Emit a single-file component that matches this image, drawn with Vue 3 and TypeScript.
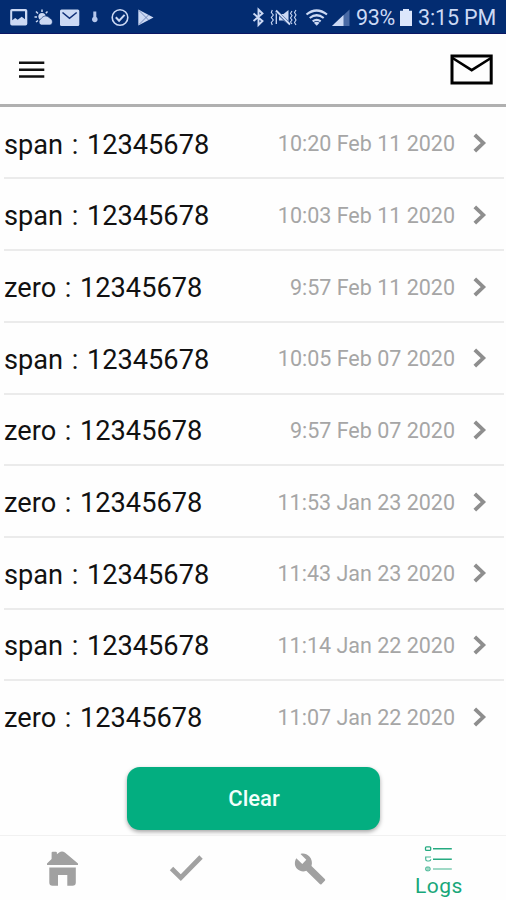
<script setup lang="ts">
interface LogEntry {
  kind: 'span' | 'zero'
  serial: string
  time: string
}

const logs: LogEntry[] = [
  { kind: 'span', serial: '12345678', time: '10:20 Feb 11 2020' },
  { kind: 'span', serial: '12345678', time: '10:03 Feb 11 2020' },
  { kind: 'zero', serial: '12345678', time: '9:57 Feb 11 2020' },
  { kind: 'span', serial: '12345678', time: '10:05 Feb 07 2020' },
  { kind: 'zero', serial: '12345678', time: '9:57 Feb 07 2020' },
  { kind: 'zero', serial: '12345678', time: '11:53 Jan 23 2020' },
  { kind: 'span', serial: '12345678', time: '11:43 Jan 23 2020' },
  { kind: 'span', serial: '12345678', time: '11:14 Jan 22 2020' },
  { kind: 'zero', serial: '12345678', time: '11:07 Jan 22 2020' },
]
</script>

<template>
  <div class="screen">
    <div class="status">
      <div class="notifications">
        <svg width="21" height="34" viewBox="10 0 21 34">
          <path fill-rule="evenodd" d="M12 9h13.500q1.800 0 1.800 1.800v13q0 1.800-1.800 1.800H12q-1.800 0-1.800-1.800v-13Q10.200 9 12 9Zm.2 2.300v9l3-2.300 2.500 1.800 4-3 3.300 2.500v-8Z" fill="#ccd9f4" />
        </svg>
        <svg width="25" height="34" viewBox="31 0 25 34">
          <circle cx="42" cy="16.500" r="3.600" fill="#ccd9f4" />
          <path d="M42 9.500v2.500M36 11.500l2 2M47.500 11.500l-1.700 1.700M34.500 17h2.500M36 22l2-1.500" stroke="#ccd9f4" stroke-width="1.500" />
          <path d="M41 25a3.400 3.400 0 0 1 .2-6.300 5 5 0 0 1 8.600-.4c3 .4 4 6.700-.3 6.700Z" fill="#ccd9f4" stroke="#032c71" stroke-width=".6" />
        </svg>
        <svg width="27" height="34" viewBox="56 0 27 34">
          <rect x="60" y="9.500" width="19.300" height="16.500" rx="1.500" fill="#ccd9f4" />
          <path d="m62.500 12.500 7 5.800 7.200-5.800" fill="none" stroke="#102f78" stroke-width="1.600" />
        </svg>
        <svg width="24" height="34" viewBox="83 0 24 34">
          <path d="M93.300 11.500h3V17a2.800 2.800 0 1 1-3 0Z" fill="#b6c7eb" />
        </svg>
        <svg width="26" height="34" viewBox="107 0 26 34">
          <circle cx="120" cy="17.500" r="7.800" fill="none" stroke="#ccd9f4" stroke-width="1.600" />
          <path d="m115.800 17.200 3.300 3.500 5.500-5.800" fill="none" stroke="#ccd9f4" stroke-width="2" />
        </svg>
        <svg width="24" height="34" viewBox="133 0 24 34">
          <path d="M138.300 9.500 153.500 17.500l-15.200 8Z" fill="#ccd9f4" />
          <path d="m139 10.500 9.500 9.500M139 24.500l9.500-9.500" stroke="#5e77ad" stroke-width=".8" />
        </svg>
      </div>
      <div class="system">
        <svg width="19" height="34" viewBox="249 0 19 34">
          <path d="m253.500 13.500 9 7.500-4 4V9.500l4 4-9 7.500" fill="none" stroke="#ccd9f4" stroke-width="1.900" />
        </svg>
        <svg width="34" height="34" viewBox="268 0 34 34">
          <path d="m272.300 10-1 2.500 2 2.500-2 2.500 2 2.500-2 2.500 1 2.500M292 11l-1.500 2.500 1.500 2-1.500 2.500 1.500 2-1.500 2 1.500 2M296 10l-1.500 2.500 1.500 2.500-1.500 2.500 1.500 2.500-1.500 2.500 1.500 2.500" fill="none" stroke="#ccd9f4" stroke-width="1.100" />
          <path d="M276.300 11v13" stroke="#ccd9f4" stroke-width="1.300" />
          <path d="M279 14h4.500l5-4v14.500l-5-4H279Z" fill="#ccd9f4" />
          <path d="m276 11 14 13.500" stroke="#032c71" stroke-width="3" />
          <path d="m276 10.500 14 14" stroke="#ccd9f4" stroke-width="1.900" />
        </svg>
        <svg width="27" height="34" viewBox="302 0 27 34">
          <path d="M306.500 14.500q10-8 20.500 0M309.700 18q7-5.500 14 0M312.700 21.300q4-3 8 0" fill="none" stroke="#ccd9f4" stroke-width="2.200" />
          <path d="m313.800 22.800 2.900 3 2.900-3q-2.900-2-5.800 0Z" fill="#ccd9f4" />
        </svg>
        <svg width="27" height="34" viewBox="329 0 27 34">
          <path d="M332 26 349.500 9.500V26Z" fill="#496aa5" />
          <path d="M332 26 343.500 15v11Z" fill="#ccd9f4" />
        </svg>
        <span class="percent">93%</span>
        <svg width="20" height="34" viewBox="396 0 20 34">
          <path d="M403 9h6v1.700h3V26H400V10.700h3Z" fill="#dce6fb" />
        </svg>
        <span class="clock">3:15 PM</span>
      </div>
    </div>

    <header class="toolbar">
      <svg width="27" height="20" viewBox="18 60 27 20">
        <path d="M19 62.700h25.300M19 69.700h25.300M19 76.500h25.300" stroke="#111" stroke-width="2.500" />
      </svg>
      <svg width="44" height="32" viewBox="450 54 44 32">
        <rect x="452" y="56" width="39.200" height="27" fill="none" stroke="#000" stroke-width="3" />
        <path d="m452.500 58 19.200 12.200L491 58" fill="none" stroke="#000" stroke-width="2.600" />
      </svg>
    </header>

    <main class="logs">
      <div v-for="log in logs" :key="log.time" class="row">
        <span class="name">{{ log.kind }} : {{ log.serial }}</span>
        <span class="time">{{ log.time }}</span>
        <svg class="chevron" width="14" height="22" viewBox="0 0 14 22">
          <path d="m1.800 2.800 8.500 8.200-8.500 8.200" fill="none" stroke="#8e8e8e" stroke-width="3.800" />
        </svg>
      </div>
    </main>

    <div class="actions">
      <button class="clear" type="button">Clear</button>
    </div>

    <nav class="tabs">
      <div class="tab home">
        <svg width="32" height="36" viewBox="46 851 32 36">
          <path d="M47 865v-1.500l4.600-4.500v-6.300q0-1 1-1h3.300q1 0 1 1v1.500l2.200-1.800q2.900-2 5.800 0L78 863.500v1.500Z" fill="#a1a1a1" />
          <path d="M49.300 867.600h26.500v14.900q0 3.300-3.300 3.300H67.300V875H58v10.800h-5.400q-3.300 0-3.300-3.300Z" fill="#a1a1a1" />
        </svg>
      </div>
      <div class="tab check">
        <svg width="34" height="28" viewBox="169 855 34 28">
          <path d="m171.500 869.500 9.300 9.200L201 858" fill="none" stroke="#a1a1a1" stroke-width="4.800" />
        </svg>
      </div>
      <div class="tab tools">
        <svg width="34" height="34" viewBox="293 852 34 34">
          <path d="m300.500 854 5.800 5.800-4 4.300-6-5.800c-2.300 4-1.700 8.200 1 10.800 2.600 2.300 6 2.900 9 1.700l13.500 13.300q1 .7 1.900-.2l3.100-3.100q1-1 0-1.900L311.500 866c1-3.400.3-6.800-2.100-9.400-2.500-2.600-5.700-3.600-8.900-2.600Z" fill="#a1a1a1" />
        </svg>
      </div>
      <div class="tab active">
        <svg width="30" height="29" viewBox="425 844 30 29">
          <path d="M434 848.800h18.800M434 859.300h18.800" stroke="#25aa80" stroke-width="1.400" />
          <path d="M434 869h18.800" stroke="#a0d9c6" stroke-width="2" />
          <rect x="426.500" y="846.800" width="5.200" height="3.600" rx="1" fill="none" stroke="#25aa80" stroke-width="1.300" />
          <path d="M432 857h-5.300v2.300q0 1.700 1.800 1.700h1.500q1.800 0 1.800-1.700" fill="none" stroke="#4bb898" stroke-width="1.200" />
          <rect x="426.500" y="867" width="4.700" height="3.800" rx="1.500" fill="#a0d9c6" stroke="#4bb898" stroke-width="1" />
        </svg>
        <span class="label">Logs</span>
      </div>
    </nav>
  </div>
</template>

<style>
body {
  margin: 0;
  background: #fff;
}
</style>

<style scoped>
.screen {
  width: 506px;
  height: 900px;
  display: flex;
  flex-direction: column;
  overflow: hidden;
  background: #fefefe;
  font-family: Roboto, "Liberation Sans", sans-serif;
}
svg {
  display: block;
  flex: none;
}
.status {
  box-sizing: border-box;
  height: 34px;
  flex: none;
  display: flex;
  justify-content: space-between;
  padding: 0 8px 0 10px;
  background: #032c71;
  border-bottom: 1px solid #0b1763;
  color: #ccd9f4;
}
.notifications,
.system {
  display: flex;
}
.system span {
  font-size: 21.500px;
  line-height: 35px;
  white-space: nowrap;
}
.percent {
  width: 40px;
  letter-spacing: -0.3px;
}
.clock {
  width: 80px;
  margin-left: 2px;
  letter-spacing: -0.15px;
}
.toolbar {
  box-sizing: border-box;
  height: 73px;
  flex: none;
  display: flex;
  align-items: center;
  justify-content: space-between;
  padding: 2px 12px 0 18px;
  border-bottom: 3px solid #b0b0b0;
}
.logs {
  flex: none;
  padding: 0.800px 2px 0 4px;
}
.row {
  box-sizing: border-box;
  height: 71.700px;
  display: flex;
  align-items: center;
  border-bottom: 2px solid #ebebeb;
}
.row:last-child {
  border-bottom-color: transparent;
}
.name {
  flex: 1;
  font-size: 27.200px;
  line-height: 32px;
  word-spacing: 1.900px;
  color: #111;
  padding-top: 4px;
}
.time {
  font-size: 21.500px;
  line-height: 26px;
  color: #a6a6a6;
  padding-top: 3px;
}
.chevron {
  margin: 1px 17px 0 18px;
}
.actions {
  flex: none;
  height: 77px;
  display: flex;
  justify-content: center;
  align-items: flex-end;
}
.clear {
  width: 253px;
  height: 63px;
  margin: 0;
  border: 0;
  border-radius: 13px;
  background: #03ae80;
  box-shadow: 0 2px 4px rgba(0, 0, 0, 0.35);
  color: #f2fffb;
  font: 500 22px/28px Roboto, "Liberation Sans", sans-serif;
  padding: 2px 0 0 2px;
}
.tabs {
  box-sizing: border-box;
  margin-top: 5px;
  height: 65px;
  flex: none;
  display: flex;
  border-top: 1px solid #f1f1f1;
}
.tab {
  width: 124px;
  display: flex;
  flex-direction: column;
  align-items: center;
}
.home {
  padding-top: 15px;
}
.check {
  padding-top: 18px;
}
.tools {
  padding-top: 16px;
}
.active {
  width: 134px;
  padding-top: 8px;
}
.label {
  margin-top: 1px;
  font-size: 21px;
  line-height: 25px;
  letter-spacing: 0.5px;
  color: #18a779;
}
</style>
